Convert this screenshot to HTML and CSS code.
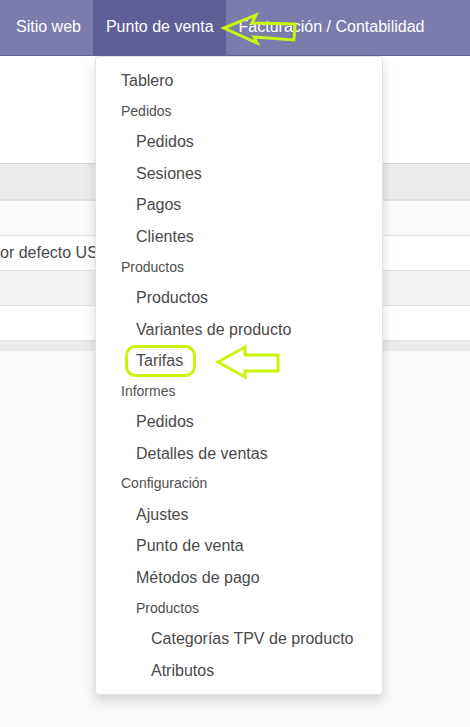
FILE: index.html
```html
<!DOCTYPE html>
<html lang="es">
<head>
<meta charset="utf-8">
<title>Punto de venta</title>
<link rel="stylesheet" href="styles.css">
</head>
<body>
<header class="navbar">
  <a class="nav-item">Sitio web</a>
  <a class="nav-item active">Punto de venta</a>
  <a class="nav-item">Facturación / Contabilidad</a>
</header>
<div class="control-panel"></div>
<div class="table">
  <div class="thead"></div>
  <div class="row odd"></div>
  <div class="row"><span class="cell">or defecto USD</span></div>
  <div class="row odd"></div>
  <div class="row"></div>
  <div class="tfoot"></div>
</div>

<nav class="dropdown">
  <a class="item l0">Tablero</a>
  <div class="hdr l0">Pedidos</div>
  <a class="item l1">Pedidos</a>
  <a class="item l1">Sesiones</a>
  <a class="item l1">Pagos</a>
  <a class="item l1">Clientes</a>
  <div class="hdr l0">Productos</div>
  <a class="item l1">Productos</a>
  <a class="item l1">Variantes de producto</a>
  <a class="item l1">Tarifas</a>
  <div class="hdr l0">Informes</div>
  <a class="item l1">Pedidos</a>
  <a class="item l1">Detalles de ventas</a>
  <div class="hdr l0">Configuración</div>
  <a class="item l1">Ajustes</a>
  <a class="item l1">Punto de venta</a>
  <a class="item l1">Métodos de pago</a>
  <div class="hdr l1">Productos</div>
  <a class="item l2">Categorías TPV de producto</a>
  <a class="item l2">Atributos</a>
</nav>

<svg class="annotations" width="470" height="727" viewBox="0 0 470 727">
  <polygon points="224,28 256,15 252,23 295,24 294,40 254,37 257,43" fill="none" stroke="#c8f50a" stroke-width="3" stroke-linejoin="miter"/>
  <rect x="126.5" y="346.5" width="68" height="29" rx="9" fill="none" stroke="#c8f50a" stroke-width="3"/>
  <polygon points="218,362 245,347 245,355 278,355 278,371 245,371 245,377" fill="none" stroke="#c8f50a" stroke-width="3" stroke-linejoin="miter"/>
</svg>
</body>
</html>
```
FILE: styles.css
```css
* { box-sizing: border-box; }
html, body { margin: 0; padding: 0; }
body {
  background: #f9f9f9;
  font-family: "Liberation Sans", Arial, sans-serif;
  font-size: 16px;
  color: #4a4a4a;
  width: 470px;
  height: 727px;
  overflow: hidden;
  position: relative;
}
.navbar {
  display: flex;
  height: 56px;
  background: #7c7bad;
  border-bottom: 1px solid #66659a;
  padding-left: 3.5px;
}
.nav-item {
  display: flex;
  align-items: center;
  padding: 0 12.5px 1px;
  color: #fff;
  white-space: nowrap;
}
.nav-item.active { background: #5f5e97; }
.control-panel {
  height: 108px;
  background: #fff;
  border-bottom: 1px solid #d5d5d5;
}
.table { display: flex; flex-direction: column; }
.thead {
  height: 37px;
  background: #ececec;
  border-bottom: 2px solid #dee2e6;
}
.row {
  height: 35px;
  background: #fff;
  border-bottom: 1px solid #e2e2e2;
  display: flex;
  align-items: center;
}
.row:nth-of-type(2) { background: #fafafa; }
.row.odd + .row + .row.odd { background: #f3f3f3; }
.cell {
  white-space: nowrap;
  color: #4a4a4a;
}
.tfoot {
  height: 10px;
  background: #ebebeb;
}
.dropdown {
  position: absolute;
  left: 95px;
  top: 56px;
  width: 288px;
  display: flex;
  flex-direction: column;
  padding: 8px 0;
  background: #fff;
  border: 1px solid #e2e2e6;
  border-radius: 4px;
  box-shadow: 0 6px 12px rgba(0, 0, 0, 0.15);
}
.item {
  height: 31.7px;
  line-height: 31.7px;
  font-size: 16px;
  color: #4a4a4a;
  white-space: nowrap;
}
.hdr {
  height: 29.2px;
  line-height: 29.2px;
  font-size: 14px;
  color: #4f4f4f;
  white-space: nowrap;
}
.l0 { padding-left: 25px; }
.l1 { padding-left: 40px; }
.l2 { padding-left: 55px; }
.annotations {
  position: absolute;
  left: 0;
  top: 0;
  pointer-events: none;
}
```
